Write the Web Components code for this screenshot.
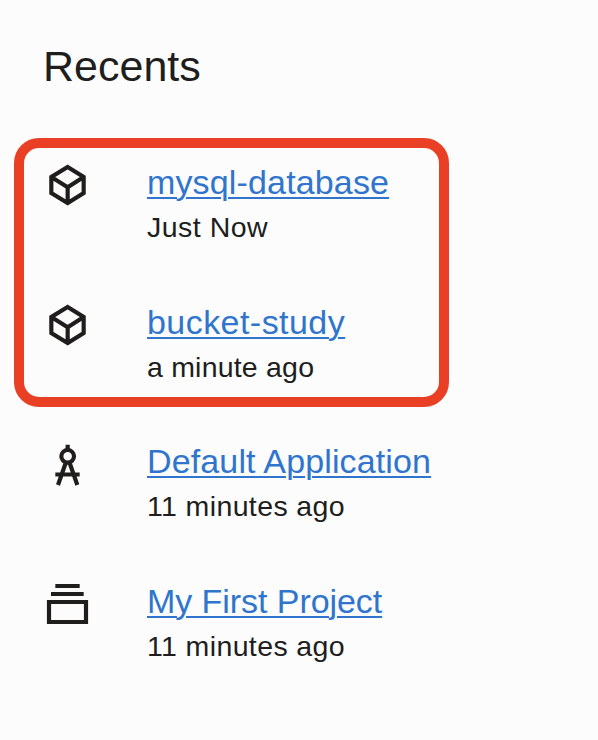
<!DOCTYPE html>
<html lang="en">
<head>
<meta charset="utf-8">
<title>Recents</title>
<style>
html, body { margin: 0; background: #fcfcfc; }
body { font-family: "Liberation Sans", Arial, sans-serif; color: #201e1c; }
</style>
</head>
<body>
<recents-panel>
  <span slot="title">Recents</span>
  <highlight-frame>
    <recent-item icon="cube" style="--ls:.15px;--ts:.5px">mysql-database<span slot="time">Just Now</span></recent-item>
    <recent-item icon="cube" style="--ls:.45px;--ts:.2px">bucket-study<span slot="time">a minute ago</span></recent-item>
  </highlight-frame>
  <recent-item icon="compass" style="--ls:.13px;--ts:.37px;--top:4px">Default Application<span slot="time">11 minutes ago</span></recent-item>
  <recent-item icon="stack" style="--ls:-.06px;--ts:.37px;--top:4px">My First Project<span slot="time">11 minutes ago</span></recent-item>
</recents-panel>
<script>
const ICONS = {
  cube: '<path d="M83 36 131 66V114L83 144 34 114V66ZM34 66 83 97 131 66M83 97V144"/>',
  compass: '<path d="M83 29V45M46 118.500H119M77 84 54 150M89 84 112 150"/><circle cx="83" cy="64" r="19"/>',
  stack: '<path d="M46 33H119M33 57H131M27 81H138V141H27Z"/>'
};
function define(name, html, setup) {
  customElements.define(name, class extends HTMLElement {
    constructor() {
      super();
      this.attachShadow({ mode: "open" }).innerHTML = html;
    }
    connectedCallback() { if (setup) setup(this); }
  });
}
define("line-icon", `<style>
  :host { display: block; width: 60px; height: 60px; }
  svg { display: block; fill: none; stroke: #201e1c; stroke-width: 12.5; }
</style><svg width="60" height="60" viewBox="0 0 180 180"></svg>`, el => {
  el.shadowRoot.querySelector("svg").innerHTML = ICONS[el.getAttribute("name")] || "";
});
define("recent-item", `<style>
  :host { display: grid; grid-template-columns: 60px 1fr; column-gap: 47px; height: 140px; padding-left: 40px; box-sizing: border-box; white-space: nowrap; }
  .text { display: flex; flex-direction: column; align-items: flex-start; padding-top: var(--top, 5px); gap: 1px; }
  a { font-size: 34px; line-height: 44px; letter-spacing: var(--ls); color: #3075cd; text-decoration: underline; text-decoration-thickness: 2px; text-underline-offset: 3px; }
  .time { font-size: 28.5px; line-height: 44px; letter-spacing: var(--ts); }
</style><line-icon></line-icon><div class="text"><a href="#"><slot></slot></a><div class="time"><slot name="time"></slot></div></div>`, el => {
  const icon = el.shadowRoot.querySelector("line-icon");
  icon.setAttribute("name", el.getAttribute("icon"));
  icon.shadowRoot.querySelector("svg").innerHTML = ICONS[el.getAttribute("icon")];
});
define("highlight-frame", `<style>
  :host { display: block; box-sizing: border-box; width: 435px; height: 269px; margin: 0 0 28px 14px; border: 10px solid #e93f25; border-radius: 25px; padding-top: 7px; }
  ::slotted(recent-item) { padding-left: 16px; }
</style><slot></slot>`);
define("recents-panel", `<style>
  :host { display: block; box-sizing: border-box; height: 740px; overflow: hidden; }
  h1 { margin: 0; padding: 41px 0 47px 43px; font-size: 43px; line-height: 50px; font-weight: 400; letter-spacing: 0; }
</style><h1><slot name="title"></slot></h1><slot></slot>`);
</script>
</body>
</html>
